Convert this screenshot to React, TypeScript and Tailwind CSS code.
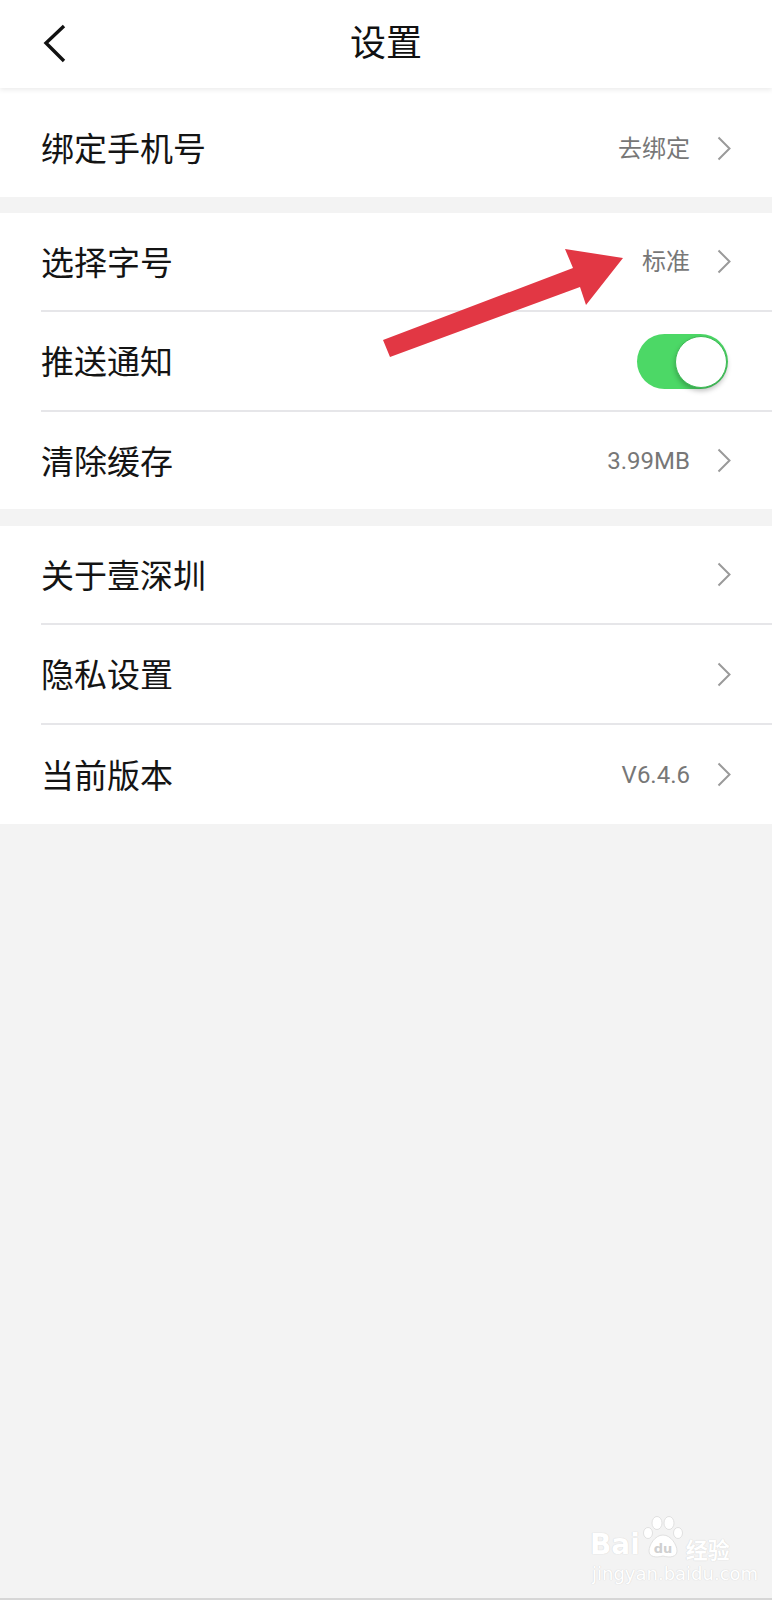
import React from "react";

const FONT = { fontFamily: 'Roboto, "Noto Sans CJK SC", sans-serif' };

function Chevron() {
  return (
    <svg width="14" height="25" viewBox="0 0 14 25" className="shrink-0">
      <polyline points="1.5,1.5 12.5,12.5 1.5,23.5" fill="none" stroke="#9a9a9a" strokeWidth="2" />
    </svg>
  );
}

function Row({ label, value, chevron = true, toggle = false, h = "h-[97px]" }: { label: string; value?: string; chevron?: boolean; toggle?: boolean; h?: string }) {
  return (
    <div className={`${h} flex items-center pl-[41px] pr-[41px] bg-white`}>
      <div className="flex-1 text-[33px] text-[#141414] leading-none pt-[3px]">{label}</div>
      {value && <div className="text-[24px] text-[#777777] leading-none mr-[27px] pt-[1px]">{value}</div>}
      {chevron && <Chevron />}
      {toggle && (
        <div className="w-[91px] h-[55px] rounded-full bg-[#4cd866] flex items-center justify-end pr-[1px] mr-[3px] mt-[1px]">
          <div className="w-[52px] h-[52px] rounded-full bg-white border border-[#3dbb55] shadow-[0_3px_5px_rgba(0,0,0,0.25)]" />
        </div>
      )}
    </div>
  );
}

function Divider() {
  return (
    <div className="bg-white pl-[41px]">
      <div className="h-[2px] bg-[#e6e6e9]" />
    </div>
  );
}

export default function App() {
  return (
    <div className="relative w-full h-[1600px] bg-[#f3f3f3] overflow-hidden" style={FONT}>
      <div className="relative z-10 h-[88px] bg-white flex items-center justify-center shadow-[0_2px_5px_rgba(0,0,0,0.08)]">
        <svg width="30" height="44" viewBox="0 0 30 44" className="absolute left-[38px] top-[22px]">
          <polyline points="26,4 8,21 26,39" fill="none" stroke="#111" strokeWidth="3.4" />
        </svg>
        <div className="text-[36px] text-[#111] leading-none mt-[0px]">设置</div>
      </div>

      <div className="bg-white pt-[11px]">
        <Row label="绑定手机号" value="去绑定" h="h-[98px]" />
      </div>

      <div className="h-[16px]" />
      <div className="bg-white">
        <Row label="选择字号" value="标准" />
        <Divider />
        <Row label="推送通知" chevron={false} toggle h="h-[98px]" />
        <Divider />
        <Row label="清除缓存" value="3.99MB" />
      </div>

      <div className="h-[17px]" />
      <div className="bg-white">
        <Row label="关于壹深圳" />
        <Divider />
        <Row label="隐私设置" h="h-[98px]" />
        <Divider />
        <Row label="当前版本" value="V6.4.6" h="h-[99px]" />
      </div>

      <svg className="absolute left-0 top-0 pointer-events-none" width="772" height="600" viewBox="0 0 772 600">
        <polygon points="383,340 573,268 565,249 623,258 586,305 580,287 390,357" fill="#e23744" />
      </svg>

      <div className="absolute left-[590px] top-[1515px] pointer-events-none select-none">
        <div className="flex items-end">
          <span className="text-[28px] font-bold leading-none text-white" style={{ fontFamily: '"DejaVu Sans", sans-serif', textShadow: "0 0 1px #d8d8d8, 0 0 1px #d8d8d8" }}>Bai</span>
          <span className="relative w-[42px] h-[44px] mx-[2px]">
            <svg width="42" height="44" viewBox="0 0 42 44" className="absolute left-0 top-0">
              <g fill="#fff" stroke="#d9d9d9" strokeWidth="0.8">
                <ellipse cx="6" cy="18" rx="4.5" ry="5.5" />
                <ellipse cx="15" cy="8" rx="5" ry="6.5" />
                <ellipse cx="27" cy="8" rx="5" ry="6.5" />
                <ellipse cx="36" cy="18" rx="4.5" ry="5.5" />
                <path d="M21 20 C13 20 7 30 7 36 C7 42 14 43 21 41 C28 43 35 42 35 36 C35 30 29 20 21 20 Z" />
              </g>
              <text x="21" y="38" textAnchor="middle" fontSize="13" fontWeight="bold" fill="#d0d0d0" style={{ fontFamily: '"DejaVu Sans", sans-serif' }}>du</text>
            </svg>
          </span>
          <span className="text-[22px] font-bold leading-none text-white" style={{ fontFamily: '"Noto Sans CJK SC", sans-serif', textShadow: "0 0 1px #d8d8d8, 0 0 1px #d8d8d8" }}>经验</span>
        </div>
        <div className="text-[18px] leading-none text-white mt-[6px] ml-[2px]" style={{ fontFamily: '"DejaVu Sans", sans-serif', textShadow: "0 0 1px #d8d8d8, 0 0 1px #d8d8d8" }}>jingyan.baidu.com</div>
      </div>

      <div className="absolute left-0 bottom-0 w-full h-[2px] bg-[#d6d6d6]" />
    </div>
  );
}
